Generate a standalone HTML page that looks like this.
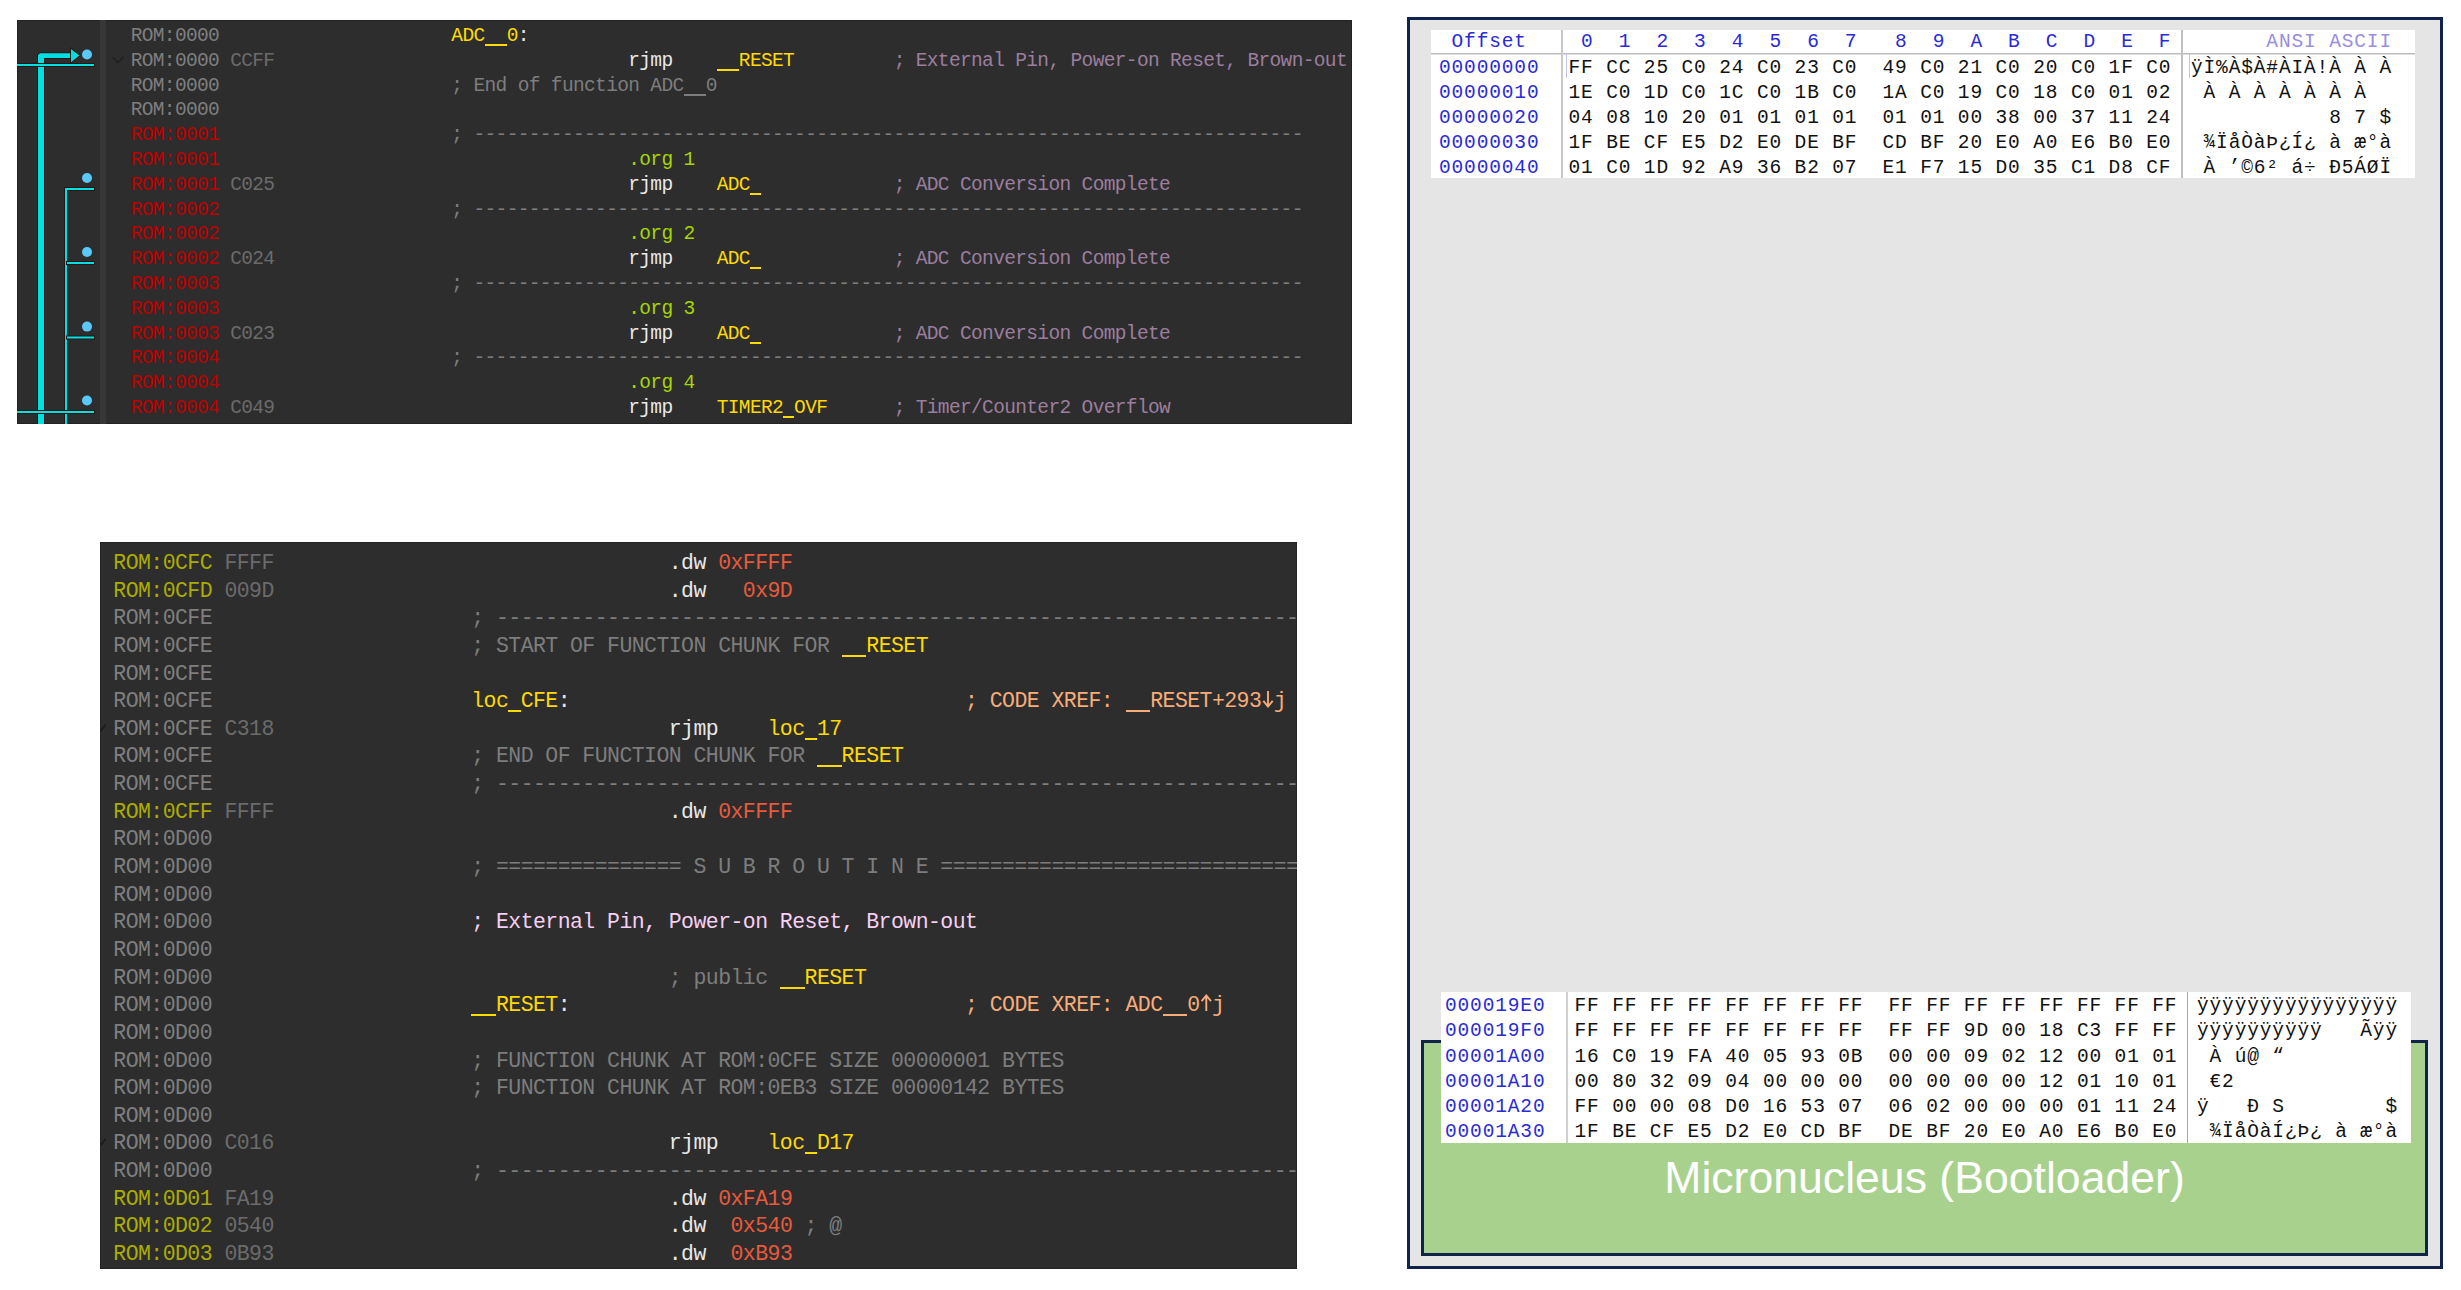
<!DOCTYPE html>
<html><head><meta charset="utf-8"><style>
html,body{margin:0;padding:0;background:#fff;}
body{width:2461px;height:1290px;position:relative;overflow:hidden;}
.abs{position:absolute;}
.t{position:absolute;white-space:pre;font-family:"Liberation Mono",monospace;}
.ida{position:absolute;background:#2d2d2d;box-shadow:inset 0 0 0 1px #222;}
</style></head><body>
<div class="ida" style="left:17px;top:20px;width:1335px;height:404px;overflow:hidden">
  <div class="abs" style="left:83px;top:0;width:6px;height:404px;background:#373737"></div>
<svg class="abs" style="left:0;top:0" width="1335" height="404" viewBox="17 20 1335 404">
<g fill="#00e0e0" stroke="#231717" stroke-width="2" paint-order="stroke" stroke-linejoin="miter">
<polygon points="38,426 38,55 40,53.3 71,53.3 71,58 44,58 44,426"/>
<polygon points="71,49 79.3,55.6 71,62.2"/>
<rect x="17" y="64" width="77" height="2"/>
<polygon points="65,426 65,188 94,188 94,190 67,190 67,426"/>
<rect x="67" y="262" width="27" height="2"/>
<rect x="67" y="336.5" width="27" height="2"/>
<rect x="17" y="411" width="77" height="2"/>
</g>
<g fill="#5ac8fa">
<circle cx="87" cy="54.5" r="5"/>
<circle cx="87" cy="178" r="5"/>
<circle cx="87" cy="252" r="5"/>
<circle cx="87" cy="326.6" r="5"/>
<circle cx="87" cy="400.5" r="5"/>
</g>
<path d="M112.5,57 L118,62.5 L123.5,57" fill="none" stroke="#1f1f1f" stroke-width="1.6"/>
</svg>
</div>
<div class="ida" style="left:100px;top:542px;width:1197px;height:727px;overflow:hidden">
<svg class="abs" style="left:0;top:0" width="12" height="1000"><path d="M0.8,189 L5.5,182.5" stroke="#1c1c1c" stroke-width="1.8"/><path d="M0.8,603.5 L5.5,597" stroke="#1c1c1c" stroke-width="1.8"/></svg>
<svg class="abs" style="left:0;top:0" width="1197" height="727"><g fill="none" stroke="#f8ac7a" stroke-width="1.9"><path d="M1168,149 V164.5 M1163.3,158.8 L1168,164.5 L1172.7,158.8"/><path d="M1106.3,469 V453.5 M1101.6,459.2 L1106.3,453.5 L1111,459.2"/></g></svg>
<div class="t" style="left:13.30px;top:9.00px;font-size:21.50px;line-height:24px;letter-spacing:-0.558px;color:#acac00">ROM:0CFC</div>
<div class="t" style="left:124.40px;top:9.00px;font-size:21.50px;line-height:24px;letter-spacing:-0.558px;color:#6b6b6b">FFFF</div>
<div class="t" style="left:568.78px;top:9.00px;font-size:21.50px;line-height:24px;letter-spacing:-0.558px;color:#e8e8e8">.dw</div>
<div class="t" style="left:618.16px;top:9.00px;font-size:21.50px;line-height:24px;letter-spacing:-0.558px;color:#e85a3c">0xFFFF</div>
<div class="t" style="left:13.30px;top:37.00px;font-size:21.50px;line-height:24px;letter-spacing:-0.558px;color:#acac00">ROM:0CFD</div>
<div class="t" style="left:124.40px;top:37.00px;font-size:21.50px;line-height:24px;letter-spacing:-0.558px;color:#6b6b6b">009D</div>
<div class="t" style="left:568.78px;top:37.00px;font-size:21.50px;line-height:24px;letter-spacing:-0.558px;color:#e8e8e8">.dw</div>
<div class="t" style="left:642.84px;top:37.00px;font-size:21.50px;line-height:24px;letter-spacing:-0.558px;color:#e85a3c">0x9D</div>
<div class="t" style="left:13.30px;top:64.00px;font-size:21.50px;line-height:24px;letter-spacing:-0.558px;color:#7f7f7f">ROM:0CFE</div>
<div class="t" style="left:371.28px;top:64.00px;font-size:21.50px;line-height:24px;letter-spacing:-0.558px;color:#7d7d7d">; ---------------------------------------------------------------------------</div>
<div class="t" style="left:13.30px;top:92.00px;font-size:21.50px;line-height:24px;letter-spacing:-0.558px;color:#7f7f7f">ROM:0CFE</div>
<div class="t" style="left:371.28px;top:92.00px;font-size:21.50px;line-height:24px;letter-spacing:-0.558px;color:#7d7d7d">; START OF FUNCTION CHUNK FOR</div>
<div class="t" style="left:741.60px;top:92.00px;font-size:21.50px;line-height:24px;letter-spacing:-0.558px;color:#ffd900">  RESET</div><div class="abs" style="left:741.60px;top:113px;width:24.69px;height:2px;background:#ffd900"></div>
<div class="t" style="left:13.30px;top:120.00px;font-size:21.50px;line-height:24px;letter-spacing:-0.558px;color:#7f7f7f">ROM:0CFE</div>
<div class="t" style="left:13.30px;top:147.00px;font-size:21.50px;line-height:24px;letter-spacing:-0.558px;color:#7f7f7f">ROM:0CFE</div>
<div class="t" style="left:371.28px;top:147.00px;font-size:21.50px;line-height:24px;letter-spacing:-0.558px;color:#ffd900">loc CFE</div><div class="abs" style="left:408.31px;top:168px;width:12.34px;height:2px;background:#ffd900"></div>
<div class="t" style="left:457.68px;top:147.00px;font-size:21.50px;line-height:24px;letter-spacing:-0.558px;color:#e8e8e8">:</div>
<div class="t" style="left:865.04px;top:147.00px;font-size:21.50px;line-height:24px;letter-spacing:-0.558px;color:#f8ac7a">; CODE XREF:   RESET+293 j</div><div class="abs" style="left:1025.51px;top:168px;width:24.69px;height:2px;background:#f8ac7a"></div>
<div class="t" style="left:13.30px;top:175.00px;font-size:21.50px;line-height:24px;letter-spacing:-0.558px;color:#7f7f7f">ROM:0CFE</div>
<div class="t" style="left:124.40px;top:175.00px;font-size:21.50px;line-height:24px;letter-spacing:-0.558px;color:#6b6b6b">C318</div>
<div class="t" style="left:568.78px;top:175.00px;font-size:21.50px;line-height:24px;letter-spacing:-0.558px;color:#e8e8e8">rjmp</div>
<div class="t" style="left:667.53px;top:175.00px;font-size:21.50px;line-height:24px;letter-spacing:-0.558px;color:#ffd900">loc 17</div><div class="abs" style="left:704.56px;top:196px;width:12.34px;height:2px;background:#ffd900"></div>
<div class="t" style="left:13.30px;top:202.00px;font-size:21.50px;line-height:24px;letter-spacing:-0.558px;color:#7f7f7f">ROM:0CFE</div>
<div class="t" style="left:371.28px;top:202.00px;font-size:21.50px;line-height:24px;letter-spacing:-0.558px;color:#7d7d7d">; END OF FUNCTION CHUNK FOR</div>
<div class="t" style="left:716.91px;top:202.00px;font-size:21.50px;line-height:24px;letter-spacing:-0.558px;color:#ffd900">  RESET</div><div class="abs" style="left:716.91px;top:223px;width:24.69px;height:2px;background:#ffd900"></div>
<div class="t" style="left:13.30px;top:230.00px;font-size:21.50px;line-height:24px;letter-spacing:-0.558px;color:#7f7f7f">ROM:0CFE</div>
<div class="t" style="left:371.28px;top:230.00px;font-size:21.50px;line-height:24px;letter-spacing:-0.558px;color:#7d7d7d">; ---------------------------------------------------------------------------</div>
<div class="t" style="left:13.30px;top:258.00px;font-size:21.50px;line-height:24px;letter-spacing:-0.558px;color:#acac00">ROM:0CFF</div>
<div class="t" style="left:124.40px;top:258.00px;font-size:21.50px;line-height:24px;letter-spacing:-0.558px;color:#6b6b6b">FFFF</div>
<div class="t" style="left:568.78px;top:258.00px;font-size:21.50px;line-height:24px;letter-spacing:-0.558px;color:#e8e8e8">.dw</div>
<div class="t" style="left:618.16px;top:258.00px;font-size:21.50px;line-height:24px;letter-spacing:-0.558px;color:#e85a3c">0xFFFF</div>
<div class="t" style="left:13.30px;top:285.00px;font-size:21.50px;line-height:24px;letter-spacing:-0.558px;color:#7f7f7f">ROM:0D00</div>
<div class="t" style="left:13.30px;top:313.00px;font-size:21.50px;line-height:24px;letter-spacing:-0.558px;color:#7f7f7f">ROM:0D00</div>
<div class="t" style="left:371.28px;top:313.00px;font-size:21.50px;line-height:24px;letter-spacing:-0.558px;color:#7d7d7d">; =============== S U B R O U T I N E ========================================</div>
<div class="t" style="left:13.30px;top:341.00px;font-size:21.50px;line-height:24px;letter-spacing:-0.558px;color:#7f7f7f">ROM:0D00</div>
<div class="t" style="left:13.30px;top:368.00px;font-size:21.50px;line-height:24px;letter-spacing:-0.558px;color:#7f7f7f">ROM:0D00</div>
<div class="t" style="left:371.28px;top:368.00px;font-size:21.50px;line-height:24px;letter-spacing:-0.558px;color:#f6d0f4">; External Pin, Power-on Reset, Brown-out</div>
<div class="t" style="left:13.30px;top:396.00px;font-size:21.50px;line-height:24px;letter-spacing:-0.558px;color:#7f7f7f">ROM:0D00</div>
<div class="t" style="left:13.30px;top:424.00px;font-size:21.50px;line-height:24px;letter-spacing:-0.558px;color:#7f7f7f">ROM:0D00</div>
<div class="t" style="left:568.78px;top:424.00px;font-size:21.50px;line-height:24px;letter-spacing:-0.558px;color:#7d7d7d">; public</div>
<div class="t" style="left:679.88px;top:424.00px;font-size:21.50px;line-height:24px;letter-spacing:-0.558px;color:#ffd900">  RESET</div><div class="abs" style="left:679.88px;top:445px;width:24.69px;height:2px;background:#ffd900"></div>
<div class="t" style="left:13.30px;top:451.00px;font-size:21.50px;line-height:24px;letter-spacing:-0.558px;color:#7f7f7f">ROM:0D00</div>
<div class="t" style="left:371.28px;top:451.00px;font-size:21.50px;line-height:24px;letter-spacing:-0.558px;color:#ffd900">  RESET</div><div class="abs" style="left:371.28px;top:472px;width:24.69px;height:2px;background:#ffd900"></div>
<div class="t" style="left:457.68px;top:451.00px;font-size:21.50px;line-height:24px;letter-spacing:-0.558px;color:#e8e8e8">:</div>
<div class="t" style="left:865.04px;top:451.00px;font-size:21.50px;line-height:24px;letter-spacing:-0.558px;color:#f8ac7a">; CODE XREF: ADC  0 j</div><div class="abs" style="left:1062.54px;top:472px;width:24.69px;height:2px;background:#f8ac7a"></div>
<div class="t" style="left:13.30px;top:479.00px;font-size:21.50px;line-height:24px;letter-spacing:-0.558px;color:#7f7f7f">ROM:0D00</div>
<div class="t" style="left:13.30px;top:507.00px;font-size:21.50px;line-height:24px;letter-spacing:-0.558px;color:#7f7f7f">ROM:0D00</div>
<div class="t" style="left:371.28px;top:507.00px;font-size:21.50px;line-height:24px;letter-spacing:-0.558px;color:#7d7d7d">; FUNCTION CHUNK AT ROM:0CFE SIZE 00000001 BYTES</div>
<div class="t" style="left:13.30px;top:534.00px;font-size:21.50px;line-height:24px;letter-spacing:-0.558px;color:#7f7f7f">ROM:0D00</div>
<div class="t" style="left:371.28px;top:534.00px;font-size:21.50px;line-height:24px;letter-spacing:-0.558px;color:#7d7d7d">; FUNCTION CHUNK AT ROM:0EB3 SIZE 00000142 BYTES</div>
<div class="t" style="left:13.30px;top:562.00px;font-size:21.50px;line-height:24px;letter-spacing:-0.558px;color:#7f7f7f">ROM:0D00</div>
<div class="t" style="left:13.30px;top:589.00px;font-size:21.50px;line-height:24px;letter-spacing:-0.558px;color:#7f7f7f">ROM:0D00</div>
<div class="t" style="left:124.40px;top:589.00px;font-size:21.50px;line-height:24px;letter-spacing:-0.558px;color:#6b6b6b">C016</div>
<div class="t" style="left:568.78px;top:589.00px;font-size:21.50px;line-height:24px;letter-spacing:-0.558px;color:#e8e8e8">rjmp</div>
<div class="t" style="left:667.53px;top:589.00px;font-size:21.50px;line-height:24px;letter-spacing:-0.558px;color:#ffd900">loc D17</div><div class="abs" style="left:704.56px;top:610px;width:12.34px;height:2px;background:#ffd900"></div>
<div class="t" style="left:13.30px;top:617.00px;font-size:21.50px;line-height:24px;letter-spacing:-0.558px;color:#7f7f7f">ROM:0D00</div>
<div class="t" style="left:371.28px;top:617.00px;font-size:21.50px;line-height:24px;letter-spacing:-0.558px;color:#7d7d7d">; ---------------------------------------------------------------------------</div>
<div class="t" style="left:13.30px;top:645.00px;font-size:21.50px;line-height:24px;letter-spacing:-0.558px;color:#acac00">ROM:0D01</div>
<div class="t" style="left:124.40px;top:645.00px;font-size:21.50px;line-height:24px;letter-spacing:-0.558px;color:#6b6b6b">FA19</div>
<div class="t" style="left:568.78px;top:645.00px;font-size:21.50px;line-height:24px;letter-spacing:-0.558px;color:#e8e8e8">.dw</div>
<div class="t" style="left:618.16px;top:645.00px;font-size:21.50px;line-height:24px;letter-spacing:-0.558px;color:#e85a3c">0xFA19</div>
<div class="t" style="left:13.30px;top:672.00px;font-size:21.50px;line-height:24px;letter-spacing:-0.558px;color:#acac00">ROM:0D02</div>
<div class="t" style="left:124.40px;top:672.00px;font-size:21.50px;line-height:24px;letter-spacing:-0.558px;color:#6b6b6b">0540</div>
<div class="t" style="left:568.78px;top:672.00px;font-size:21.50px;line-height:24px;letter-spacing:-0.558px;color:#e8e8e8">.dw</div>
<div class="t" style="left:630.50px;top:672.00px;font-size:21.50px;line-height:24px;letter-spacing:-0.558px;color:#e85a3c">0x540</div>
<div class="t" style="left:704.56px;top:672.00px;font-size:21.50px;line-height:24px;letter-spacing:-0.558px;color:#7d7d7d">; @</div>
<div class="t" style="left:13.30px;top:700.00px;font-size:21.50px;line-height:24px;letter-spacing:-0.558px;color:#acac00">ROM:0D03</div>
<div class="t" style="left:124.40px;top:700.00px;font-size:21.50px;line-height:24px;letter-spacing:-0.558px;color:#6b6b6b">0B93</div>
<div class="t" style="left:568.78px;top:700.00px;font-size:21.50px;line-height:24px;letter-spacing:-0.558px;color:#e8e8e8">.dw</div>
<div class="t" style="left:630.50px;top:700.00px;font-size:21.50px;line-height:24px;letter-spacing:-0.558px;color:#e85a3c">0xB93</div>
</div>
<!-- hex panel -->
<div class="abs" style="left:1407px;top:17px;width:1030px;height:1246px;border:3px solid #10234c;background:#e5e5e5"></div>
<div class="abs" style="left:1431px;top:30px;width:984px;height:148px;background:#fff"></div>
<div class="abs" style="left:1431px;top:53px;width:984px;height:1px;background:#bdbdbd"></div><div class="abs" style="left:1431px;top:54px;width:984px;height:1px;background:#dedede"></div>
<div class="abs" style="left:1561px;top:30px;width:2px;height:148px;background:#c8c8c8"></div>
<div class="abs" style="left:2181px;top:30px;width:2px;height:148px;background:#c0c0c0"></div>
<div class="abs" style="left:1566px;top:54px;width:1px;height:24px;background:#c4c4f0"></div>
<div class="abs" style="left:2189px;top:54px;width:1px;height:24px;background:#c4c4f0"></div>
<div class="abs" style="left:1421px;top:1040px;width:1001px;height:210px;border:3px solid #10234c;background:#a9d18e"></div>
<div class="abs" style="left:1441px;top:992px;width:970px;height:151px;background:#fff"></div>
<div class="abs" style="left:1566px;top:992px;width:2px;height:151px;background:#d0d0d0"></div>
<div class="abs" style="left:2187px;top:992px;width:1px;height:151px;background:#a8a8a8"></div>
<div class="abs" style="left:1421px;top:1150px;width:1007px;text-align:center;font-family:'Liberation Sans',sans-serif;font-size:44.6px;line-height:56px;color:#fff">Micronucleus (Bootloader)</div>
<div class="t" style="left:130.70px;top:25.00px;font-size:19.50px;line-height:22px;letter-spacing:-0.645px;color:#7f7f7f">ROM:0000</div>
<div class="t" style="left:451.35px;top:25.00px;font-size:19.50px;line-height:22px;letter-spacing:-0.645px;color:#ffdb00">ADC  0</div><div class="abs" style="left:484.52px;top:44px;width:22.11px;height:2px;background:#ffdb00"></div>
<div class="t" style="left:517.69px;top:25.00px;font-size:19.50px;line-height:22px;letter-spacing:-0.645px;color:#e8e8e8">:</div>
<div class="t" style="left:130.70px;top:50.00px;font-size:19.50px;line-height:22px;letter-spacing:-0.645px;color:#7f7f7f">ROM:0000</div>
<div class="t" style="left:230.21px;top:50.00px;font-size:19.50px;line-height:22px;letter-spacing:-0.645px;color:#6b6b6b">CCFF</div>
<div class="t" style="left:628.26px;top:50.00px;font-size:19.50px;line-height:22px;letter-spacing:-0.645px;color:#e8e8e8">rjmp</div>
<div class="t" style="left:716.72px;top:50.00px;font-size:19.50px;line-height:22px;letter-spacing:-0.645px;color:#ffd900">  RESET</div><div class="abs" style="left:716.72px;top:69px;width:22.11px;height:2px;background:#ffd900"></div>
<div class="t" style="left:893.63px;top:50.00px;font-size:19.50px;line-height:22px;letter-spacing:-0.645px;color:#9b7e9e">; External Pin, Power-on Reset, Brown-out</div>
<div class="t" style="left:130.70px;top:75.00px;font-size:19.50px;line-height:22px;letter-spacing:-0.645px;color:#7f7f7f">ROM:0000</div>
<div class="t" style="left:451.35px;top:75.00px;font-size:19.50px;line-height:22px;letter-spacing:-0.645px;color:#7d7d7d">; End of function ADC  0</div><div class="abs" style="left:683.55px;top:94px;width:22.11px;height:2px;background:#7d7d7d"></div>
<div class="t" style="left:130.70px;top:99.00px;font-size:19.50px;line-height:22px;letter-spacing:-0.645px;color:#7f7f7f">ROM:0000</div>
<div class="t" style="left:130.70px;top:124.00px;font-size:19.50px;line-height:22px;letter-spacing:-0.645px;color:#bd0000">ROM:0001</div>
<div class="t" style="left:451.35px;top:124.00px;font-size:19.50px;line-height:22px;letter-spacing:-0.645px;color:#7d7d7d">; ---------------------------------------------------------------------------</div>
<div class="t" style="left:130.70px;top:149.00px;font-size:19.50px;line-height:22px;letter-spacing:-0.645px;color:#bd0000">ROM:0001</div>
<div class="t" style="left:628.26px;top:149.00px;font-size:19.50px;line-height:22px;letter-spacing:-0.645px;color:#a6d600">.org 1</div>
<div class="t" style="left:130.70px;top:174.00px;font-size:19.50px;line-height:22px;letter-spacing:-0.645px;color:#bd0000">ROM:0001</div>
<div class="t" style="left:230.21px;top:174.00px;font-size:19.50px;line-height:22px;letter-spacing:-0.645px;color:#6b6b6b">C025</div>
<div class="t" style="left:628.26px;top:174.00px;font-size:19.50px;line-height:22px;letter-spacing:-0.645px;color:#e8e8e8">rjmp</div>
<div class="t" style="left:716.72px;top:174.00px;font-size:19.50px;line-height:22px;letter-spacing:-0.645px;color:#ffd900">ADC </div><div class="abs" style="left:749.89px;top:193px;width:11.06px;height:2px;background:#ffd900"></div>
<div class="t" style="left:893.63px;top:174.00px;font-size:19.50px;line-height:22px;letter-spacing:-0.645px;color:#9b7e9e">; ADC Conversion Complete</div>
<div class="t" style="left:130.70px;top:199.00px;font-size:19.50px;line-height:22px;letter-spacing:-0.645px;color:#bd0000">ROM:0002</div>
<div class="t" style="left:451.35px;top:199.00px;font-size:19.50px;line-height:22px;letter-spacing:-0.645px;color:#7d7d7d">; ---------------------------------------------------------------------------</div>
<div class="t" style="left:130.70px;top:223.00px;font-size:19.50px;line-height:22px;letter-spacing:-0.645px;color:#bd0000">ROM:0002</div>
<div class="t" style="left:628.26px;top:223.00px;font-size:19.50px;line-height:22px;letter-spacing:-0.645px;color:#a6d600">.org 2</div>
<div class="t" style="left:130.70px;top:248.00px;font-size:19.50px;line-height:22px;letter-spacing:-0.645px;color:#bd0000">ROM:0002</div>
<div class="t" style="left:230.21px;top:248.00px;font-size:19.50px;line-height:22px;letter-spacing:-0.645px;color:#6b6b6b">C024</div>
<div class="t" style="left:628.26px;top:248.00px;font-size:19.50px;line-height:22px;letter-spacing:-0.645px;color:#e8e8e8">rjmp</div>
<div class="t" style="left:716.72px;top:248.00px;font-size:19.50px;line-height:22px;letter-spacing:-0.645px;color:#ffd900">ADC </div><div class="abs" style="left:749.89px;top:267px;width:11.06px;height:2px;background:#ffd900"></div>
<div class="t" style="left:893.63px;top:248.00px;font-size:19.50px;line-height:22px;letter-spacing:-0.645px;color:#9b7e9e">; ADC Conversion Complete</div>
<div class="t" style="left:130.70px;top:273.00px;font-size:19.50px;line-height:22px;letter-spacing:-0.645px;color:#bd0000">ROM:0003</div>
<div class="t" style="left:451.35px;top:273.00px;font-size:19.50px;line-height:22px;letter-spacing:-0.645px;color:#7d7d7d">; ---------------------------------------------------------------------------</div>
<div class="t" style="left:130.70px;top:298.00px;font-size:19.50px;line-height:22px;letter-spacing:-0.645px;color:#bd0000">ROM:0003</div>
<div class="t" style="left:628.26px;top:298.00px;font-size:19.50px;line-height:22px;letter-spacing:-0.645px;color:#a6d600">.org 3</div>
<div class="t" style="left:130.70px;top:323.00px;font-size:19.50px;line-height:22px;letter-spacing:-0.645px;color:#bd0000">ROM:0003</div>
<div class="t" style="left:230.21px;top:323.00px;font-size:19.50px;line-height:22px;letter-spacing:-0.645px;color:#6b6b6b">C023</div>
<div class="t" style="left:628.26px;top:323.00px;font-size:19.50px;line-height:22px;letter-spacing:-0.645px;color:#e8e8e8">rjmp</div>
<div class="t" style="left:716.72px;top:323.00px;font-size:19.50px;line-height:22px;letter-spacing:-0.645px;color:#ffd900">ADC </div><div class="abs" style="left:749.89px;top:342px;width:11.06px;height:2px;background:#ffd900"></div>
<div class="t" style="left:893.63px;top:323.00px;font-size:19.50px;line-height:22px;letter-spacing:-0.645px;color:#9b7e9e">; ADC Conversion Complete</div>
<div class="t" style="left:130.70px;top:347.00px;font-size:19.50px;line-height:22px;letter-spacing:-0.645px;color:#bd0000">ROM:0004</div>
<div class="t" style="left:451.35px;top:347.00px;font-size:19.50px;line-height:22px;letter-spacing:-0.645px;color:#7d7d7d">; ---------------------------------------------------------------------------</div>
<div class="t" style="left:130.70px;top:372.00px;font-size:19.50px;line-height:22px;letter-spacing:-0.645px;color:#bd0000">ROM:0004</div>
<div class="t" style="left:628.26px;top:372.00px;font-size:19.50px;line-height:22px;letter-spacing:-0.645px;color:#a6d600">.org 4</div>
<div class="t" style="left:130.70px;top:397.00px;font-size:19.50px;line-height:22px;letter-spacing:-0.645px;color:#bd0000">ROM:0004</div>
<div class="t" style="left:230.21px;top:397.00px;font-size:19.50px;line-height:22px;letter-spacing:-0.645px;color:#6b6b6b">C049</div>
<div class="t" style="left:628.26px;top:397.00px;font-size:19.50px;line-height:22px;letter-spacing:-0.645px;color:#e8e8e8">rjmp</div>
<div class="t" style="left:716.72px;top:397.00px;font-size:19.50px;line-height:22px;letter-spacing:-0.645px;color:#ffd900">TIMER2 OVF</div><div class="abs" style="left:783.06px;top:416px;width:11.06px;height:2px;background:#ffd900"></div>
<div class="t" style="left:893.63px;top:397.00px;font-size:19.50px;line-height:22px;letter-spacing:-0.645px;color:#9b7e9e">; Timer/Counter2 Overflow</div>
<div class="t" style="left:1451.56px;top:31.00px;font-size:19.50px;line-height:22px;letter-spacing:0.858px;color:#2a2ad8">Offset</div>
<div class="t" style="left:1568.50px;top:31.00px;font-size:19.50px;line-height:22px;letter-spacing:0.858px;color:#2a2ad8"> 0  1  2  3  4  5  6  7   8  9  A  B  C  D  E  F</div>
<div class="t" style="left:2191.00px;top:31.00px;font-size:19.50px;line-height:22px;letter-spacing:0.858px;color:#9a8ee0">      ANSI ASCII</div>
<div class="t" style="left:1439.00px;top:57.00px;font-size:19.50px;line-height:22px;letter-spacing:0.858px;color:#2a2ad8">00000000</div>
<div class="t" style="left:1568.50px;top:57.00px;font-size:19.50px;line-height:22px;letter-spacing:0.858px;color:#111">FF CC 25 C0 24 C0 23 C0  49 C0 21 C0 20 C0 1F C0</div>
<div class="t" style="left:2191.00px;top:57.00px;font-size:19.50px;line-height:22px;letter-spacing:0.858px;color:#111">ÿÌ%À$À#ÀIÀ!À À À</div>
<div class="t" style="left:1439.00px;top:82.00px;font-size:19.50px;line-height:22px;letter-spacing:0.858px;color:#2a2ad8">00000010</div>
<div class="t" style="left:1568.50px;top:82.00px;font-size:19.50px;line-height:22px;letter-spacing:0.858px;color:#111">1E C0 1D C0 1C C0 1B C0  1A C0 19 C0 18 C0 01 02</div>
<div class="t" style="left:2191.00px;top:82.00px;font-size:19.50px;line-height:22px;letter-spacing:0.858px;color:#111"> À À À À À À À  </div>
<div class="t" style="left:1439.00px;top:107.00px;font-size:19.50px;line-height:22px;letter-spacing:0.858px;color:#2a2ad8">00000020</div>
<div class="t" style="left:1568.50px;top:107.00px;font-size:19.50px;line-height:22px;letter-spacing:0.858px;color:#111">04 08 10 20 01 01 01 01  01 01 00 38 00 37 11 24</div>
<div class="t" style="left:2191.00px;top:107.00px;font-size:19.50px;line-height:22px;letter-spacing:0.858px;color:#111">           8 7 $</div>
<div class="t" style="left:1439.00px;top:132.00px;font-size:19.50px;line-height:22px;letter-spacing:0.858px;color:#2a2ad8">00000030</div>
<div class="t" style="left:1568.50px;top:132.00px;font-size:19.50px;line-height:22px;letter-spacing:0.858px;color:#111">1F BE CF E5 D2 E0 DE BF  CD BF 20 E0 A0 E6 B0 E0</div>
<div class="t" style="left:2191.00px;top:132.00px;font-size:19.50px;line-height:22px;letter-spacing:0.858px;color:#111"> ¾ÏåÒàÞ¿Í¿ à æ°à</div>
<div class="t" style="left:1439.00px;top:157.00px;font-size:19.50px;line-height:22px;letter-spacing:0.858px;color:#2a2ad8">00000040</div>
<div class="t" style="left:1568.50px;top:157.00px;font-size:19.50px;line-height:22px;letter-spacing:0.858px;color:#111">01 C0 1D 92 A9 36 B2 07  E1 F7 15 D0 35 C1 D8 CF</div>
<div class="t" style="left:2191.00px;top:157.00px;font-size:19.50px;line-height:22px;letter-spacing:0.858px;color:#111"> À ’©6² á÷ Ð5ÁØÏ</div>
<div class="t" style="left:1445.00px;top:995.00px;font-size:19.50px;line-height:22px;letter-spacing:0.858px;color:#2a2ad8">000019E0</div>
<div class="t" style="left:1574.50px;top:995.00px;font-size:19.50px;line-height:22px;letter-spacing:0.858px;color:#111">FF FF FF FF FF FF FF FF  FF FF FF FF FF FF FF FF</div>
<div class="t" style="left:2197.00px;top:995.00px;font-size:19.50px;line-height:22px;letter-spacing:0.858px;color:#111">ÿÿÿÿÿÿÿÿÿÿÿÿÿÿÿÿ</div>
<div class="t" style="left:1445.00px;top:1020.00px;font-size:19.50px;line-height:22px;letter-spacing:0.858px;color:#2a2ad8">000019F0</div>
<div class="t" style="left:1574.50px;top:1020.00px;font-size:19.50px;line-height:22px;letter-spacing:0.858px;color:#111">FF FF FF FF FF FF FF FF  FF FF 9D 00 18 C3 FF FF</div>
<div class="t" style="left:2197.00px;top:1020.00px;font-size:19.50px;line-height:22px;letter-spacing:0.858px;color:#111">ÿÿÿÿÿÿÿÿÿÿ   Ãÿÿ</div>
<div class="t" style="left:1445.00px;top:1046.00px;font-size:19.50px;line-height:22px;letter-spacing:0.858px;color:#2a2ad8">00001A00</div>
<div class="t" style="left:1574.50px;top:1046.00px;font-size:19.50px;line-height:22px;letter-spacing:0.858px;color:#111">16 C0 19 FA 40 05 93 0B  00 00 09 02 12 00 01 01</div>
<div class="t" style="left:2197.00px;top:1046.00px;font-size:19.50px;line-height:22px;letter-spacing:0.858px;color:#111"> À ú@ “         </div>
<div class="t" style="left:1445.00px;top:1071.00px;font-size:19.50px;line-height:22px;letter-spacing:0.858px;color:#2a2ad8">00001A10</div>
<div class="t" style="left:1574.50px;top:1071.00px;font-size:19.50px;line-height:22px;letter-spacing:0.858px;color:#111">00 80 32 09 04 00 00 00  00 00 00 00 12 01 10 01</div>
<div class="t" style="left:2197.00px;top:1071.00px;font-size:19.50px;line-height:22px;letter-spacing:0.858px;color:#111"> €2             </div>
<div class="t" style="left:1445.00px;top:1096.00px;font-size:19.50px;line-height:22px;letter-spacing:0.858px;color:#2a2ad8">00001A20</div>
<div class="t" style="left:1574.50px;top:1096.00px;font-size:19.50px;line-height:22px;letter-spacing:0.858px;color:#111">FF 00 00 08 D0 16 53 07  06 02 00 00 00 01 11 24</div>
<div class="t" style="left:2197.00px;top:1096.00px;font-size:19.50px;line-height:22px;letter-spacing:0.858px;color:#111">ÿ   Ð S        $</div>
<div class="t" style="left:1445.00px;top:1121.00px;font-size:19.50px;line-height:22px;letter-spacing:0.858px;color:#2a2ad8">00001A30</div>
<div class="t" style="left:1574.50px;top:1121.00px;font-size:19.50px;line-height:22px;letter-spacing:0.858px;color:#111">1F BE CF E5 D2 E0 CD BF  DE BF 20 E0 A0 E6 B0 E0</div>
<div class="t" style="left:2197.00px;top:1121.00px;font-size:19.50px;line-height:22px;letter-spacing:0.858px;color:#111"> ¾ÏåÒàÍ¿Þ¿ à æ°à</div>
</body></html>
